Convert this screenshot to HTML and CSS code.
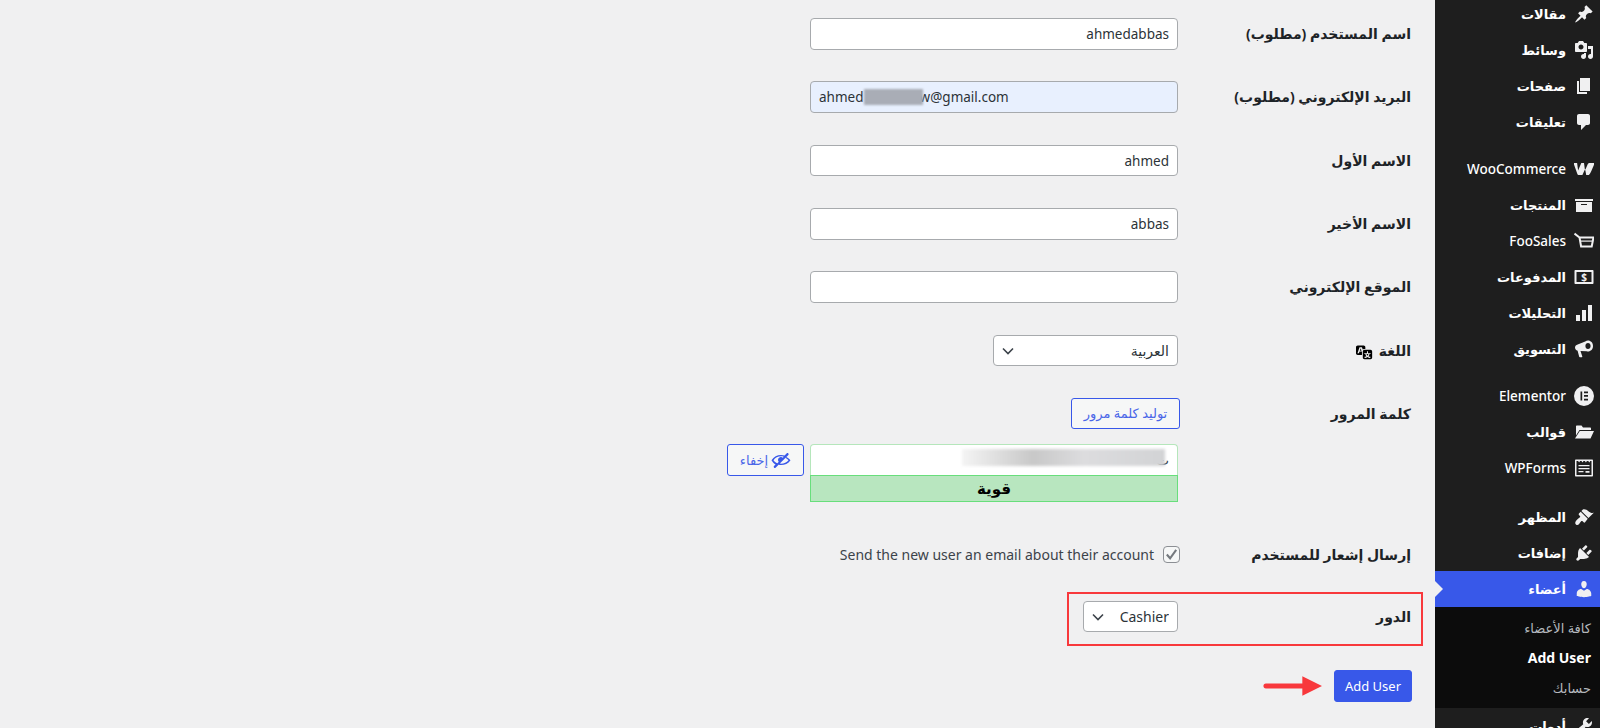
FILE: index.html
```html
<!DOCTYPE html>
<html lang="ar" dir="rtl">
<head>
    <meta charset="UTF-8">
    <meta name="viewport" content="width=device-width, initial-scale=1.0">
    <title>Add User</title>
    <link rel="stylesheet" href="styles.css">
</head>
<body>
    <div class="layout">
        <!-- Admin sidebar -->
        <aside class="sidebar">
            <nav class="menu">
                <a class="menu-item"><svg class="menu-icon" viewBox="0 0 20 20"><path d="M10.44 3.02l1.82-1.82 6.36 6.35-1.83 1.82c-1.05-.68-2.48-.57-3.41.36l-.75.75c-.92.93-1.04 2.35-.35 3.41l-1.83 1.82-2.41-2.41-2.8 2.79c-.42.42-3.38 2.71-3.8 2.29s1.86-3.39 2.28-3.81l2.79-2.79L4.1 9.36l1.83-1.82c1.05.69 2.48.57 3.4-.36l.75-.75c.93-.92 1.05-2.35.36-3.41z"/></svg><span>مقالات</span></a>
                <a class="menu-item"><svg class="menu-icon" viewBox="0 0 20 20"><path d="M13 11V4c0-.55-.45-1-1-1h-1.67L9 1H5L3.67 3H2c-.55 0-1 .45-1 1v7c0 .55.45 1 1 1h10c.55 0 1-.45 1-1zM7 4.5c1.38 0 2.5 1.12 2.5 2.5S8.38 9.5 7 9.5 4.5 8.38 4.5 7 5.62 4.5 7 4.5zM14 6h5v10.5c0 1.38-1.12 2.5-2.5 2.5S14 17.88 14 16.5s1.12-2.5 2.5-2.5c.17 0 .34.02.5.05V9h-3V6zm-4 8.05V13h2v3.5c0 1.38-1.12 2.5-2.5 2.5S7 17.88 7 16.5 8.12 14 9.5 14c.17 0 .34.02.5.05z"/></svg><span>وسائط</span></a>
                <a class="menu-item"><svg class="menu-icon" viewBox="0 0 20 20"><path d="M6 15V2h10v13H6zm-1 1h8v2H3V5h2v11z"/></svg><span>صفحات</span></a>
                <a class="menu-item"><svg class="menu-icon" viewBox="0 0 20 20"><path d="M5 2h9c1.1 0 2 .9 2 2v7c0 1.1-.9 2-2 2h-2l-5 5v-5H5c-1.1 0-2-.9-2-2V4c0-1.1.9-2 2-2z"/></svg><span>تعليقات</span></a>

                <div class="menu-gap"></div>
                <a class="menu-item menu-latin"><svg class="menu-icon" viewBox="0 0 20 20"><path d="M-.5 4h3.600l1 7.500L7.300 4h2.700l1 7.500 2.600-6C14.200 4.200 15.300 3.800 16.300 4h4.200c-.2 1.400-1.100 2.800-2.100 5.400-.9 2.300-2 4.800-3.600 6.600h-2.600l-1.100-5.900-2.700 5.900H5c-.9 0-1.500-.4-1.800-1.500z"/></svg><span>WooCommerce</span></a>
                <a class="menu-item"><svg class="menu-icon" viewBox="0 0 20 20"><path d="M19 4v2H1V4h18zM2 7h16v10H2V7zm11 3V9H7v1h6z"/></svg><span>المنتجات</span></a>
                <a class="menu-item menu-latin"><svg class="menu-icon" viewBox="0 0 20 20"><path fill="none" stroke="#f0f0f1" stroke-width="2" d="M19.500 6.500H5.500l1.600 9h10.600L19.500 6.500zM.5 2.500l5 4"/><path d="M6 9.500h13v1.200H6z"/></svg><span>FooSales</span></a>
                <a class="menu-item"><svg class="menu-icon" viewBox="0 0 20 20"><path fill-rule="evenodd" d="M1.500 3h17c.6 0 1 .4 1 1v12c0 .6-.4 1-1 1h-17c-.6 0-1-.4-1-1V4c0-.6.4-1 1-1zM2.500 5v10h15V5z"/><text class="money-sign" x="10" y="14" text-anchor="middle">$</text></svg><span>المدفوعات</span></a>
                <a class="menu-item"><svg class="menu-icon" viewBox="0 0 20 20"><path d="M18 18V2h-4v16h4zm-6 0V7H8v11h4zm-6 0v-6H2v6h4z"/></svg><span>التحليلات</span></a>
                <a class="menu-item"><svg class="menu-icon" viewBox="0 0 20 20"><path fill-rule="evenodd" d="M14 1.500c2.800 0 5 2.300 5 5.500s-2.200 5.500-5 5.500c-.5 0-1-.1-1.400-.3L6.500 12l1.800 5.500c.1.400-.1.800-.5.800H5.900c-.3 0-.6-.2-.7-.5L3.600 11.700C2 11.300 1 10 1 8.500 1 7 2.200 5.800 3.700 5.500l7.500-3.100c.8-.6 1.800-.9 2.800-.9zm0 2.500c-1.500 0-2.600 1.300-2.600 3s1.100 3 2.600 3 2.600-1.300 2.600-3-1.100-3-2.600-3z"/></svg><span>التسويق</span></a>

                <div class="menu-gap"></div>
                <a class="menu-item menu-latin"><svg class="menu-icon" viewBox="0 0 20 20"><path fill-rule="evenodd" d="M10 0a10 10 0 1 0 0 20 10 10 0 0 0 0-20zM6.500 5.500h1.700v9H6.500zm3.500 0h4v1.700h-4zm0 3.600h4v1.700h-4zm0 3.700h4v1.700h-4z"/></svg><span>Elementor</span></a>
                <a class="menu-item"><svg class="menu-icon" viewBox="0 0 20 20"><path d="M2 4.500c0-.6.4-1 1-1h4.500l1.500 2h7c.6 0 1 .4 1 1V8H5.500L2 13.500zM5.800 9H20l-3.500 7.500H1z"/></svg><span>قوالب</span></a>
                <a class="menu-item menu-latin"><svg class="menu-icon" viewBox="0 0 20 20"><path fill-rule="evenodd" d="M2 1.500h16c.6 0 1 .4 1 1v15c0 .6-.4 1-1 1H2c-.6 0-1-.4-1-1v-15c0-.6.4-1 1-1zM2.500 3v14h15V3h-1.200l-1 1.500L14.300 3h-1.400l-1 1.500L10.900 3H9.500l-1 1.500L7.500 3H6.100l-1 1.500L4.100 3z"/><path d="M4.500 7h11v1.200h-11zm0 3h11v1.200h-11zm7 3h4v1.800h-4zm-7 0h5v1.200h-5z"/></svg><span>WPForms</span></a>

                <div class="menu-gap menu-gap-big"></div>
                <a class="menu-item"><svg class="menu-icon" viewBox="0 0 20 20"><path d="M14.480 11.060L7.410 3.990l1.500-1.500c.5-.56 2.300-.47 3.510.32 1.210.8 1.430 1.280 2.910 2.100 1.180.64 2.450 1.260 4.450.85zm-.71.71L6.700 4.700 4.930 6.470c-.39.39-.39 1.020 0 1.410l1.060 1.060c.39.39.39 1.030 0 1.420-.6.6-1.430 1.110-2.210 1.690-.35.26-.7.53-1.010.84-1.340 1.340-1.810 2.750-1.360 3.830s2.130 1.790 3.220.79c.31-.31.58-.66.85-1.010.58-.78 1.090-1.610 1.690-2.210.39-.39 1.020-.39 1.410 0l1.060 1.060c.39.39 1.020.39 1.410 0z"/></svg><span>المظهر</span></a>
                <a class="menu-item"><svg class="menu-icon" viewBox="0 0 20 20"><path d="M13.110 4.360L9.870 7.600 8 5.730l3.240-3.240c.35-.34 1.050-.2 1.560.32.52.51.66 1.210.31 1.550zm-8 1.770l.91-1.120 9.010 9.010-1.190.84c-.71.71-2.630 1.160-3.820 1.160H6.140L4.900 17.260c-.59.59-1.540.59-2.120 0-.59-.58-.59-1.530 0-2.120l1.240-1.240v-3.880c0-1.130.4-3.190 1.090-3.890zm7.260 3.970l3.240-3.240c.34-.35 1.040-.21 1.550.31.520.51.660 1.210.310 1.550l-3.240 3.250z"/></svg><span>إضافات</span></a>
                <a class="menu-item menu-item-active"><svg class="menu-icon" viewBox="0 0 20 20"><path d="M10 9.250c-2.270 0-2.730-3.440-2.730-3.440C7 4.020 7.820 2 9.970 2c2.160 0 2.980 2.020 2.710 3.810 0 0-.41 3.440-2.680 3.440zm0 2.570L12.720 10c2.390 0 4.520 2.330 4.520 4.530v2.490s-3.650 1.130-7.240 1.130c-3.650 0-7.240-1.130-7.240-1.130v-2.490c0-2.250 1.940-4.480 4.470-4.480z"/></svg><span>أعضاء</span></a>
                <div class="submenu">
                    <a class="submenu-item">كافة الأعضاء</a>
                    <a class="submenu-item submenu-current">Add User</a>
                    <a class="submenu-item">حسابك</a>
                </div>
                <a class="menu-item"><svg class="menu-icon" viewBox="0 0 20 20"><path d="M16.680 9.770c-1.340 1.340-3.300 1.670-4.950.99l-5.410 6.520c-.99.99-2.590.99-3.580 0s-.99-2.590 0-3.570l6.520-5.420c-.68-1.650-.35-3.610.99-4.950 1.280-1.280 3.120-1.620 4.720-1.060l-2.890 2.890 2.820 2.820 2.860-2.870c.53 1.580.18 3.390-1.080 4.650z"/></svg><span>أدوات</span></a>
            </nav>
        </aside>

        <!-- Add user form -->
        <main class="content">
            <div class="form-row">
                <label class="form-label">اسم المستخدم (مطلوب)</label>
                <input class="text-input" type="text" value="ahmedabbas">
            </div>
            <div class="form-row">
                <label class="form-label">البريد الإلكتروني (مطلوب)</label>
                <div class="field-wrap">
                    <input class="text-input input-autofill" type="text" dir="ltr" value="ahmed                w@gmail.com">
                    <div class="blur-email"></div>
                </div>
            </div>
            <div class="form-row">
                <label class="form-label">الاسم الأول</label>
                <input class="text-input" type="text" value="ahmed">
            </div>
            <div class="form-row">
                <label class="form-label">الاسم الأخير</label>
                <input class="text-input" type="text" value="abbas">
            </div>
            <div class="form-row">
                <label class="form-label">الموقع الإلكتروني</label>
                <input class="text-input" type="text">
            </div>
            <div class="form-row">
                <label class="form-label">اللغة
                    <svg class="lang-icon" viewBox="0 0 20 20"><path d="M11 7H9.490c-.63 0-1.250.3-1.590.7L7 5H4.130l-2.390 7h1.690l.74-2H7v4H2c-1.100 0-2-.9-2-2V5c0-1.100.9-2 2-2h7c1.100 0 2 .9 2 2v2zM6.510 9H4.490l1-2.930zM10 8h7c1.100 0 2 .9 2 2v7c0 1.100-.9 2-2 2h-7c-1.100 0-2-.9-2-2v-7c0-1.100.9-2 2-2zm7.250 5v-1.080h-3.170V9.750h-1.160v2.170H9.750V13h1.280c.11.85.56 1.850 1.280 2.620-.87.36-1.890.62-2.310.62-.01.02.22.97.2 1.460.84 0 2.210-.5 3.280-1.150 1.090.65 2.480 1.150 3.340 1.150-.02-.49.2-1.440.2-1.460-.43 0-1.490-.27-2.380-.63.7-.77 1.140-1.770 1.250-2.610h1.360zm-3.810 1.930c-.5-.46-.85-1.130-1.010-1.930h2.090c-.17.8-.51 1.470-1 1.930l-.04.03s-.03-.02-.04-.03z"/></svg>
                </label>
                <div class="select-wrap select-lang">
                    <select class="select-input"><option>العربية</option></select>
                    <svg class="chevron" viewBox="0 0 12 8"><path d="M1 1.500l5 5 5-5" fill="none" stroke="#3c434a" stroke-width="1.600"/></svg>
                </div>
            </div>
            <div class="form-row password-row">
                <label class="form-label">كلمة المرور</label>
                <div class="password-fields">
                    <button class="btn-outline btn-generate">توليد كلمة مرور</button>
                    <div class="password-line">
                        <div class="password-box">
                            <div class="field-wrap">
                                <input class="text-input input-strong" type="text" value="ت">
                                <div class="blur-password"></div>
                            </div>
                            <div class="strength">قوية</div>
                        </div>
                        <button class="btn-outline btn-hide">
                            <svg class="eye-icon" viewBox="0 0 20 20"><path d="M17.200 3.300l.16.17c.39.39.39 1.020 0 1.410L4.550 17.700c-.39.39-1.030.39-1.410 0l-.17-.17c-.39-.39-.39-1.020 0-1.410l1.590-1.600C2.900 13.500 1.500 12 .5 10.200 2.800 6.700 6.200 5 10 5c1.300 0 2.500.2 3.600.6l2.200-2.300c.39-.39 1.020-.39 1.400 0zM6.400 13.160l1.340-1.340C7.300 11.300 7 10.700 7 10c0-1.660 1.340-3 3-3 .7 0 1.300.3 1.820.74l.9-.9C11.900 6.300 11 6.200 10 6.200 6.900 6.200 4.200 7.700 2.500 10.200c.9 1.200 2.300 2.300 3.900 2.960zM15.500 7c1.600.9 3 2 4 3.200-2.300 3.300-5.700 4.800-9.500 4.800-.8 0-1.600-.1-2.300-.3l1.100-1.100c.4.100.8.100 1.200.100 3 0 5.700-1.400 7.500-3.500-.8-.9-1.800-1.700-2.800-2.300z"/></svg>
                            إخفاء
                        </button>
                    </div>
                </div>
            </div>
            <div class="form-row notify-row">
                <label class="form-label">إرسال إشعار للمستخدم</label>
                <div class="notify">
                    <span class="checkbox"><svg viewBox="0 0 16 16"><path d="M3 8l3.500 4L13 3" fill="none" stroke="#75797e" stroke-width="2.200"/></svg></span>
                    <span class="notify-text" dir="ltr">Send the new user an email about their account</span>
                </div>
            </div>
            <div class="form-row role-row">
                <label class="form-label">الدور</label>
                <div class="select-wrap select-role">
                    <select class="select-input" dir="ltr"><option>Cashier</option></select>
                    <svg class="chevron" viewBox="0 0 12 8"><path d="M1 1.500l5 5 5-5" fill="none" stroke="#3c434a" stroke-width="1.600"/></svg>
                </div>
            </div>
            <div class="submit-row">
                <button class="btn-primary">Add User</button>
                <svg class="arrow" viewBox="0 0 60 20"><path d="M3 7.500h37V0l20 10-20 10v-7.500H3c-3.400 0-3.400-5 0-5z"/></svg>
            </div>
        </main>
    </div>
</body>
</html>
```
FILE: styles.css
```css
* {
    margin: 0;
    padding: 0;
    box-sizing: border-box;
}

html, body {
    width: 100%;
    height: 100%;
    overflow: hidden;
    background: #f0f0f1;
    color: #1d2327;
    font-family: 'Noto Sans', 'DejaVu Sans', sans-serif;
    font-size: 14px;
}

.layout {
    display: flex;
    height: 728px;
}

/* Sidebar */
.sidebar {
    width: 165px;
    flex-shrink: 0;
    background: #1e1e1e;
    overflow: hidden;
}

.menu {
    margin-top: -4px;
}

.menu-item {
    height: 36px;
    display: flex;
    align-items: center;
    gap: 8px;
    padding-right: 6px;
    color: #fff;
    font-size: 13px;
    font-weight: 600;
    position: relative;
}

.menu-latin {
    font-size: 13.5px;
    font-weight: 500;
}

.menu-icon {
    width: 20px;
    height: 20px;
    flex-shrink: 0;
    fill: #f0f0f1;
}

.money-sign {
    font-size: 10px;
    font-weight: 700;
}

.menu-gap {
    height: 11px;
}

.menu-gap-big {
    height: 13px;
}

.menu-item-active {
    background: #3858e9;
}

/* little notch pointing at the sidebar from the page */
.menu-item-active::after {
    content: "";
    position: absolute;
    left: 0;
    top: 10px;
    border-top: 8px solid transparent;
    border-bottom: 8px solid transparent;
    border-left: 8px solid #f0f0f1;
}

.submenu {
    background: #0c0c0c;
    height: 101px;
    padding-top: 6px;
}

.submenu-item {
    display: block;
    height: 30px;
    line-height: 30px;
    padding-right: 9px;
    color: #b4b9be;
    font-size: 13px;
}

.submenu-current {
    color: #fff;
    font-size: 14px;
    font-weight: 700;
}

/* Form */
.content {
    flex: 1;
    padding-top: 2.2px;
}

.form-row {
    display: flex;
    align-items: flex-start;
    height: 63.3px;
    padding-top: 16px;
    position: relative;
}

.form-label {
    width: 257px;
    flex-shrink: 0;
    padding-right: 24px;
    font-weight: 700;
    font-size: 14px;
    line-height: 32px;
    color: #1d2327;
}

.lang-icon {
    width: 17px;
    height: 17px;
    vertical-align: -4px;
    margin-right: 2px;
}

.field-wrap {
    position: relative;
}

.text-input {
    width: 368px;
    height: 31.5px;
    padding: 0 8px;
    border: 1px solid #a7aaad;
    border-radius: 4px;
    background: #fff;
    color: #2c3338;
    font: inherit;
    font-size: 13.5px;
    outline: none;
    display: block;
}

.input-autofill {
    background: #e8f0fe;
}

.blur-email {
    position: absolute;
    left: 54px;
    top: 8px;
    width: 59px;
    height: 16px;
    background: #a9adb6;
    filter: blur(1px);
}

.input-strong {
    border-color: #b5e6bb;
    border-bottom: none;
    border-radius: 4px 4px 0 0;
}

.blur-password {
    position: absolute;
    left: 152px;
    top: 5px;
    width: 203px;
    height: 17px;
    background: linear-gradient(to right, #f4f4f4, #c8c8c8 35%, #dcdcde 60%, #d2d3d5);
    filter: blur(1.5px);
}

.strength {
    height: 27px;
    line-height: 25px;
    text-align: center;
    font-weight: 700;
    font-size: 15px;
    background: #b8e6bf;
    border: 1px solid #68de7c;
    color: #000;
}

.select-wrap {
    position: relative;
}

.select-input {
    width: 100%;
    height: 31px;
    padding: 0 8px;
    border: 1px solid #a7aaad;
    border-radius: 4px;
    background: #fff;
    color: #2c3338;
    font: inherit;
    appearance: none;
    outline: none;
}

.select-lang {
    width: 185px;
}

.select-role {
    width: 95px;
}

.select-role .select-input {
    text-align: right;
}

.chevron {
    position: absolute;
    left: 9px;
    top: 12px;
    width: 12px;
    height: 8px;
}

.btn-outline {
    height: 31px;
    border: 1px solid #3858e9;
    border-radius: 3px;
    background: #f6f7f7;
    color: #4a66e8;
    font: inherit;
    font-size: 13px;
}

.password-row {
    height: 157px;
}

.password-fields {
    display: flex;
    flex-direction: column;
    gap: 15px;
}

.btn-generate {
    width: 109px;
    margin-right: -2px;
}

.password-line {
    display: flex;
    align-items: flex-start;
    gap: 6px;
}

.btn-hide {
    width: 77px;
    height: 32px;
    display: flex;
    align-items: center;
    justify-content: center;
    gap: 3px;
}

.eye-icon {
    width: 20px;
    height: 20px;
    fill: #3858e9;
}

.notify-row {
    height: 53px;
    padding-top: 0;
}

.notify {
    display: flex;
    align-items: center;
    gap: 9px;
    height: 31px;
    margin-right: -2px;
    color: #3c434a;
}

.checkbox {
    width: 17px;
    height: 17px;
    border: 1px solid #8c8f94;
    border-radius: 4px;
    background: #f6f7f7;
    display: block;
}

.checkbox svg {
    display: block;
    width: 15px;
    height: 15px;
}

/* red highlight drawn round the role row */
.role-row::after {
    content: "";
    position: absolute;
    right: 12px;
    left: 1067px;
    top: 0;
    height: 50px;
    border: 2px solid #f8383c;
    pointer-events: none;
}

.role-row {
    padding-top: 9px;
    height: 78px;
}

.submit-row {
    display: flex;
    align-items: center;
    gap: 12px;
    padding-right: 23px;
}

.btn-primary {
    width: 78px;
    height: 32px;
    border: 1px solid #3858e9;
    border-radius: 3px;
    background: #3858e9;
    color: #fff;
    font: inherit;
    font-size: 13px;
}

.arrow {
    width: 59px;
    height: 20px;
    fill: #f8383c;
}
```
